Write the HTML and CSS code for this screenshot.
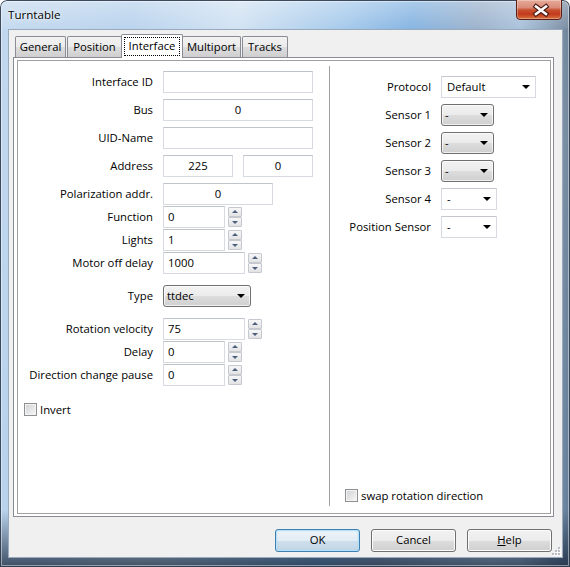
FILE: index.html
```html
<!DOCTYPE html>
<html>
<head>
<meta charset="utf-8">
<title>Turntable</title>
<link rel="stylesheet" href="styles.css">
</head>
<body>
<div class="window">
  <div class="titlebar">
    <span class="title">Turntable</span>
    <div class="close-btn">
      <svg width="46" height="20" viewBox="0 0 46 20">
        <path d="M20 6.5 L30 14 M30 6.5 L20 14" stroke="#4a1a12" stroke-width="4.8" stroke-linecap="square" fill="none"/>
        <path d="M20 6.5 L30 14 M30 6.5 L20 14" stroke="#ffffff" stroke-width="2.6" stroke-linecap="square" fill="none"/>
      </svg>
    </div>
  </div>

  <div class="client">
    <div class="tabs">
      <div class="tab w-general">General</div>
      <div class="tab w-position">Position</div>
      <div class="tab tab-active w-interface"><span class="focus">Interface</span></div>
      <div class="tab w-multiport">Multiport</div>
      <div class="tab w-tracks">Tracks</div>
    </div>

    <div class="page">
      <div class="frame">
        <div class="col col-left">
          <div class="row"><span class="lbl">Interface ID</span><div class="edit w150"></div></div>
          <div class="row"><span class="lbl">Bus</span><div class="edit w150 center">0</div></div>
          <div class="row"><span class="lbl">UID-Name</span><div class="edit w150"></div></div>
          <div class="row"><span class="lbl">Address</span>
            <div class="pair"><div class="edit w70 center">225</div><div class="edit w70 center">0</div></div>
          </div>
          <div class="row"><span class="lbl">Polarization addr.</span><div class="edit w110 center">0</div></div>
          <div class="row tight"><span class="lbl">Function</span><div class="edit w62">0</div>
            <div class="spin"><div class="spin-btn up"></div><div class="spin-btn down"></div></div>
          </div>
          <div class="row tight"><span class="lbl">Lights</span><div class="edit w62">1</div>
            <div class="spin"><div class="spin-btn up"></div><div class="spin-btn down"></div></div>
          </div>
          <div class="row tight"><span class="lbl">Motor off delay</span><div class="edit w82">1000</div>
            <div class="spin"><div class="spin-btn up"></div><div class="spin-btn down"></div></div>
          </div>
          <div class="row sep"><span class="lbl">Type</span><div class="combo combo-gray w88">ttdec</div></div>
          <div class="row sep"><span class="lbl">Rotation velocity</span><div class="edit w82">75</div>
            <div class="spin"><div class="spin-btn up"></div><div class="spin-btn down"></div></div>
          </div>
          <div class="row tight"><span class="lbl">Delay</span><div class="edit w62">0</div>
            <div class="spin"><div class="spin-btn up"></div><div class="spin-btn down"></div></div>
          </div>
          <div class="row tight"><span class="lbl">Direction change pause</span><div class="edit w62">0</div>
            <div class="spin"><div class="spin-btn up"></div><div class="spin-btn down"></div></div>
          </div>
          <div class="check-row invert"><span class="checkbox"></span><span>Invert</span></div>
        </div>

        <div class="divider"></div>

        <div class="col col-right">
          <div class="row"><span class="lbl">Protocol</span><div class="combo combo-white w95">Default</div></div>
          <div class="row"><span class="lbl">Sensor 1</span><div class="combo combo-gray w53">-</div></div>
          <div class="row"><span class="lbl">Sensor 2</span><div class="combo combo-gray w53">-</div></div>
          <div class="row"><span class="lbl">Sensor 3</span><div class="combo combo-gray w53">-</div></div>
          <div class="row"><span class="lbl">Sensor 4</span><div class="combo combo-white w56">-</div></div>
          <div class="row"><span class="lbl">Position Sensor</span><div class="combo combo-white w56">-</div></div>
          <div class="check-row swap"><span class="checkbox"></span><span>swap rotation direction</span></div>
        </div>
      </div>
    </div>

    <div class="buttons">
      <div class="btn btn-default">OK</div>
      <div class="btn">Cancel</div>
      <div class="btn"><u>H</u>elp</div>
    </div>

    <svg class="grip" width="11" height="11" viewBox="0 0 11 11">
      <g fill="#ffffff">
        <rect x="9" y="3" width="2" height="2"/><rect x="9" y="6" width="2" height="2"/><rect x="9" y="9" width="2" height="2"/>
        <rect x="6" y="6" width="2" height="2"/><rect x="6" y="9" width="2" height="2"/><rect x="3" y="9" width="2" height="2"/>
      </g>
      <g fill="#b9bcc0">
        <rect x="8" y="2" width="2" height="2"/><rect x="8" y="5" width="2" height="2"/><rect x="8" y="8" width="2" height="2"/>
        <rect x="5" y="5" width="2" height="2"/><rect x="5" y="8" width="2" height="2"/><rect x="2" y="8" width="2" height="2"/>
      </g>
    </svg>
  </div>
</div>
</body>
</html>
```

FILE: styles.css
```css
* {
  box-sizing: border-box;
}

body {
  margin: 0;
  background: #ffffff;
  font-family: "Open Sans", "Noto Sans", sans-serif;
  font-size: 11.3px;
  color: #000;
}

/* ---------- window frame ---------- */
.window {
  position: relative;
  width: 570px;
  height: 567px;
  display: flex;
  flex-direction: column;
  border-radius: 7px 7px 0 0;
  overflow: hidden;
  background:
    linear-gradient(to bottom, rgba(255,255,255,0.35) 0, rgba(255,255,255,0.08) 28px, rgba(255,255,255,0) 30px),
    linear-gradient(to bottom, rgba(20,35,55,0) 0, rgba(20,35,55,0) 510px, rgba(20,35,55,0.75) 567px),
    linear-gradient(to right, rgba(20,35,55,0) 0, rgba(20,35,55,0) 520px, rgba(20,35,55,0.45) 570px),
    linear-gradient(100deg, #c2d8ee 0%, #b5d0ec 20%, #cfe1f2 36%, #a1c7ea 52%, #7fb0e0 62%, #97aec9 72%, #a9c3de 80%, #bfd6ed 88%, #9fc0e2 100%);
  box-shadow: inset 0 0 0 1px rgba(30, 45, 65, 0.85), inset 0 0 0 2px rgba(255, 255, 255, 0.45);
}

.titlebar {
  height: 29px;
  display: flex;
  align-items: flex-start;
}

.title {
  margin: 6px 0 0 8px;
  line-height: 18px;
  font-size: 11.6px;
  color: #000;
  text-shadow: 0 0 6px rgba(255, 255, 255, 0.9), 0 0 2px rgba(255, 255, 255, 0.8);
}

.close-btn {
  margin: -1px 8px 0 auto;
  width: 46px;
  height: 21px;
  border: 1px solid #5b1e14;
  border-radius: 0 0 4px 4px;
  background: linear-gradient(#e8a998 0%, #d98c7a 40%, #c8512f 52%, #c13a1c 75%, #d9723f 100%);
  box-shadow: inset 0 0 0 1px rgba(255, 255, 255, 0.3);
}

.close-btn svg {
  display: block;
  margin: 0 0 0 -1px;
}

/* ---------- client area ---------- */
.client {
  position: relative;
  margin: 0 7px 0 8px;
  height: 529px;
  background: #f0f0f0;
  border: 1px solid #9aaabd;
  display: flex;
  flex-direction: column;
}

.grip {
  position: absolute;
  right: 1px;
  bottom: 1px;
}

/* ---------- tabs ---------- */
.tabs {
  position: relative;
  z-index: 1;
  display: flex;
  align-items: flex-end;
  gap: 1px;
  height: 23px;
  margin-top: 4px;
  padding-left: 6px;
}

.tab {
  height: 21px;
  border: 1px solid #898c95;
  border-bottom: none;
  border-radius: 2px 2px 0 0;
  background: linear-gradient(#f2f2f2, #ebebeb 50%, #dddddd 51%, #cfcfcf);
  text-align: center;
  line-height: 20px;
  white-space: nowrap;
}

.tab-active {
  height: 24px;
  margin: 0 -2px -1px;
  padding: 2px 2px 0;
  background: #ffffff;
}

.focus {
  display: block;
  height: 19px;
  border: 1px dotted #000;
  line-height: 15px;
}

.w-general { width: 51px; }
.w-position { width: 55px; }
.w-interface { width: 62px; }
.w-multiport { width: 59px; }
.w-tracks { width: 46px; }

/* ---------- tab page ---------- */
.page {
  position: relative;
  z-index: 0;
  height: 460px;
  margin: 0 8px 0 4px;
  padding: 2px 2px 2px 3px;
  border: 1px solid #898c95;
  background: #ffffff;
}

.frame {
  height: 100%;
  display: flex;
  border: 1px solid #a0a0a0;
}

.col {
  display: flex;
  flex-direction: column;
}

.col-left {
  width: 311px;
  padding-top: 10px;
}

.col-right {
  flex: 1;
  padding-top: 15px;
}

.divider {
  width: 1px;
  height: 440px;
  margin-top: 5px;
  background: #a0a0a0;
}

.row {
  display: flex;
  align-items: center;
  height: 22px;
}

.row + .row { margin-top: 6px; }
.row.tight { margin-top: 1px; }
.row.sep { margin-top: 11px; }

.lbl {
  width: 135px;
  margin: 0 10px 1px 0;
  line-height: 18px;
  text-align: right;
  white-space: nowrap;
}

.col-right .lbl {
  width: 101px;
}

/* ---------- edit fields ---------- */
.edit {
  height: 22px;
  padding: 0 4px;
  border: 1px solid #d7dbe1;
  border-top-color: #bfc3ca;
  background: #ffffff;
  line-height: 19px;
  white-space: nowrap;
}

.center { text-align: center; }

.w150 { width: 150px; }
.w110 { width: 110px; }
.w95 { width: 95px; }
.w88 { width: 88px; }
.w82 { width: 82px; }
.w70 { width: 70px; }
.w62 { width: 62px; }
.w56 { width: 56px; }
.w53 { width: 53px; }

.pair {
  display: flex;
  gap: 10px;
}

/* ---------- spin buttons ---------- */
.spin {
  display: flex;
  flex-direction: column;
  margin-left: 3px;
}

.spin-btn {
  position: relative;
  width: 14px;
  height: 10px;
  border: 1px solid #c5c8ce;
  border-radius: 1px;
  background: linear-gradient(#f7f7f7, #e3e3e3);
}

.spin-btn::after {
  content: "";
  position: absolute;
  left: 50%;
  top: 50%;
  margin-left: -3px;
  border-left: 3px solid transparent;
  border-right: 3px solid transparent;
}

.spin-btn.up::after {
  margin-top: -2px;
  border-bottom: 3px solid #4c5f80;
}

.spin-btn.down::after {
  margin-top: -1px;
  border-top: 3px solid #4c5f80;
}

/* ---------- combo boxes ---------- */
.combo {
  height: 22px;
  display: flex;
  align-items: center;
  justify-content: space-between;
  padding: 0 5px 1px 5px;
  white-space: nowrap;
}

.combo::after {
  content: "";
  margin-top: 1px;
  border-left: 4px solid transparent;
  border-right: 4px solid transparent;
  border-top: 4px solid #000;
}

.combo-white {
  background: #ffffff;
  border: 1px solid #d7dbe1;
  border-top-color: #c4c8ce;
}

.combo-gray {
  padding-left: 3px;
  border: 1px solid #707070;
  border-radius: 3px;
  background: linear-gradient(#f2f2f2, #ebebeb 50%, #dddddd 51%, #cfcfcf);
  box-shadow: inset 0 0 0 1px rgba(255, 255, 255, 0.7);
}

/* ---------- check boxes ---------- */
.check-row {
  display: flex;
  align-items: center;
  gap: 3px;
  height: 13px;
}

.check-row span:last-child {
  margin-bottom: 1px;
}

.checkbox {
  width: 13px;
  height: 13px;
  border: 1px solid #8f8f8f;
  background: linear-gradient(135deg, #cfd1d4, #f8f8f8);
  box-shadow: inset 0 0 0 1px #f4f4f4;
}

.invert {
  margin: 17px 0 0 6px;
}

.swap {
  margin: auto 0 11px 15px;
}

/* ---------- dialog buttons ---------- */
.buttons {
  display: flex;
  justify-content: flex-end;
  gap: 11px;
  margin-top: 12px;
  padding-right: 10px;
}

.btn {
  width: 85px;
  height: 23px;
  border: 1px solid #707070;
  border-radius: 3px;
  background: linear-gradient(#f2f2f2, #ebebeb 50%, #dddddd 51%, #cfcfcf);
  box-shadow: inset 0 0 0 1px #fcfcfc;
  text-align: center;
  line-height: 20px;
}

.btn-default {
  border-color: #3c7fb1;
  background: linear-gradient(#eef4f9, #e2ecf4 50%, #cfdfec 51%, #c2d6e7);
  box-shadow: inset 0 0 0 1px #b8e1f8, inset 0 0 3px rgba(72, 194, 245, 0.45);
}
```
